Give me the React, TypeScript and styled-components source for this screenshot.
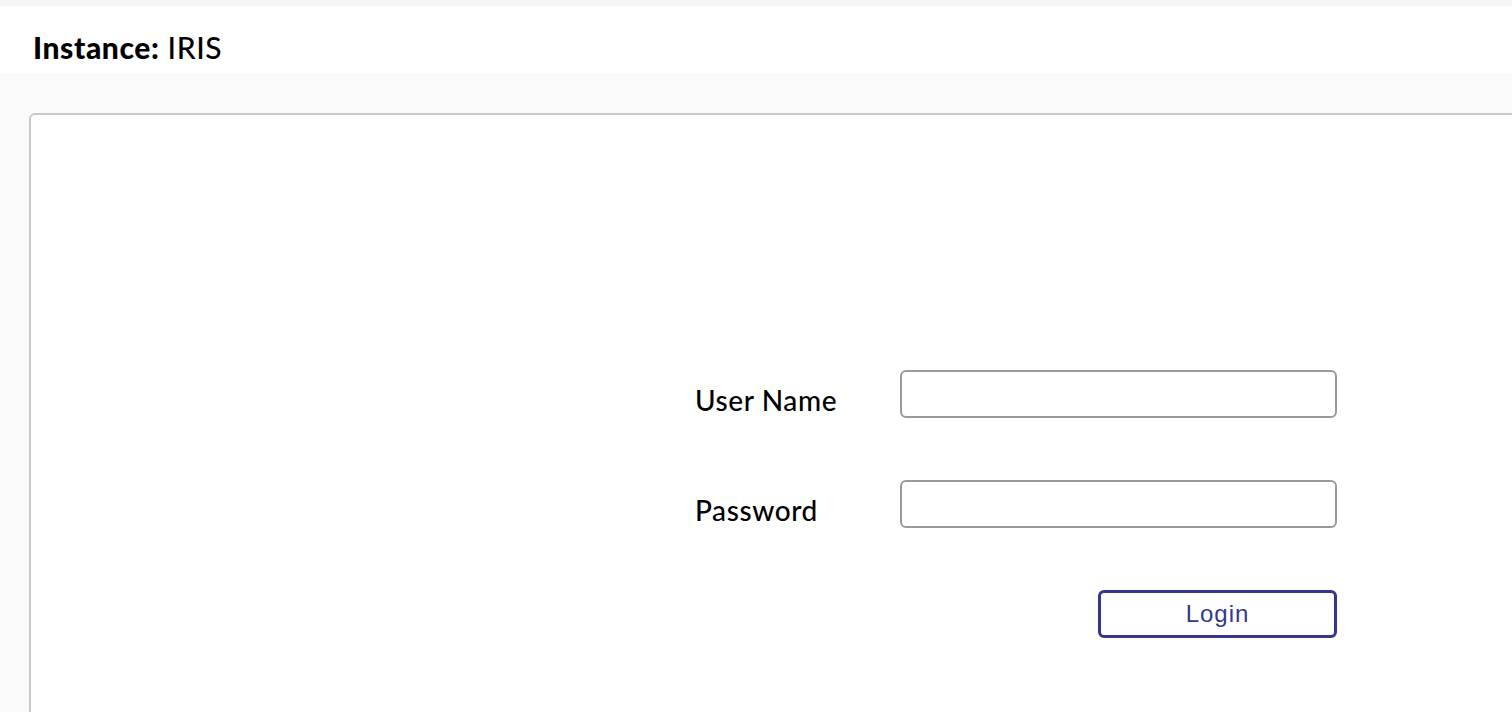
import React from "react";
import styled, { createGlobalStyle } from "styled-components";

const GlobalStyle = createGlobalStyle`
  html, body {
    margin: 0;
    padding: 0;
    background: #fafafa;
    overflow: hidden;
  }
  body {
    font-family: Lato, "Noto Sans", sans-serif;
    color: #000;
  }
`;

const App = () => {
  return (
    <>
      <GlobalStyle />
      <Page>
        <TopStrip />
        <Header>
          <InstanceTitle>
            <strong>Instance:</strong> IRIS
          </InstanceTitle>
        </Header>
        <Main>
          <Panel>
            <LoginForm onSubmit={(e) => e.preventDefault()}>
              <Label htmlFor="username">User Name</Label>
              <Input id="username" type="text" />
              <Label htmlFor="password">Password</Label>
              <Input id="password" type="password" />
              <ButtonCell>
                <LoginButton type="submit">Login</LoginButton>
              </ButtonCell>
            </LoginForm>
          </Panel>
        </Main>
      </Page>
    </>
  );
};

export default App;

const Page = styled.div`
  height: 712px;
  overflow: hidden;
  display: flex;
  flex-direction: column;
`;

const TopStrip = styled.div`
  height: 6px;
  flex-shrink: 0;
  background: #f6f6f6;
`;

const Header = styled.header`
  height: 67px;
  flex-shrink: 0;
  box-sizing: border-box;
  background: #fff;
  display: flex;
  align-items: flex-end;
  padding: 0 0 8px 33px;
`;

const InstanceTitle = styled.h1`
  margin: 0;
  font-size: 30px;
  line-height: 36px;
  font-weight: 500;
  letter-spacing: 0.6px;

  strong {
    font-weight: 900;
  }
`;

const Main = styled.main`
  flex: 1;
  padding: 40px 0 0 29px;
`;

const Panel = styled.section`
  width: 1540px;
  height: 640px;
  box-sizing: border-box;
  background: #fff;
  border: 2px solid #c9c9c9;
  border-radius: 6px;
  padding: 255px 0 0 664px;
`;

const LoginForm = styled.form`
  display: grid;
  grid-template-columns: 205px 437px;
  grid-auto-rows: 48px;
  row-gap: 62px;
  align-items: center;
`;

const Label = styled.label`
  font-size: 28px;
  font-weight: 500;
  letter-spacing: 0.6px;
  padding-top: 12px;
`;

const Input = styled.input`
  box-sizing: border-box;
  width: 437px;
  height: 48px;
  border: 2px solid #9a9a9a;
  border-radius: 6px;
  background: #fff;
  outline: none;
`;

const ButtonCell = styled.div`
  grid-column: 2;
  display: flex;
  justify-content: flex-end;
`;

const LoginButton = styled.button`
  box-sizing: border-box;
  width: 239px;
  height: 48px;
  border: 3px solid #34378d;
  border-radius: 6px;
  background: #fff;
  color: #34378d;
  font-family: "Liberation Sans", Arial, sans-serif;
  font-size: 24px;
  letter-spacing: 1px;
  cursor: pointer;
`;
